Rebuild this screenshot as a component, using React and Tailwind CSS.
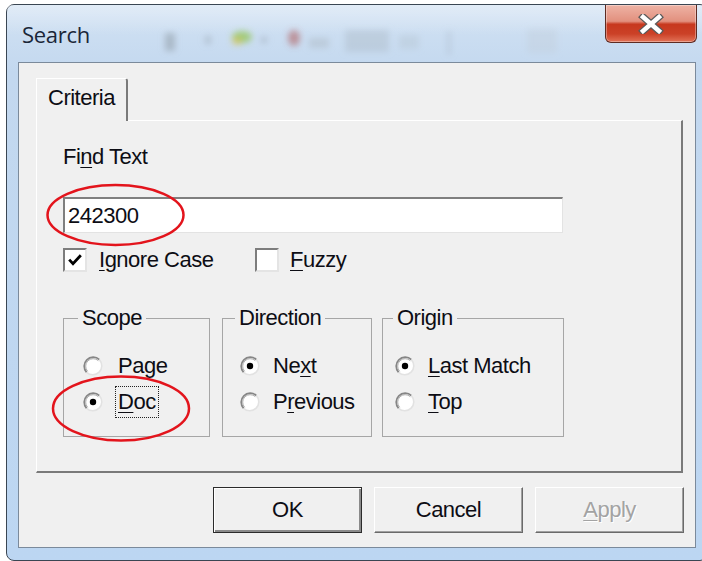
import React from "react";

const ui = "font-['Liberation_Sans',Arial,sans-serif] text-[22px] leading-[24px] tracking-[-0.5px] text-[#0d0d14]";

function Key({ children }) {
  return <span className="underline decoration-1 underline-offset-[3px]">{children}</span>;
}

function Radio({ checked }) {
  return (
    <svg width="20" height="20" viewBox="0 0 20 20" className="shrink-0">
      <circle cx="10" cy="10" r="9" fill="#fff" />
      <path d="M3.64 16.36 A9 9 0 0 1 16.36 3.64" fill="none" stroke="#868686" strokeWidth="1.8" />
      <path d="M16.36 3.64 A9 9 0 0 1 3.64 16.36" fill="none" stroke="#e2e2e2" strokeWidth="1.6" />
      <path d="M4.7 15.3 A7.5 7.5 0 0 1 15.3 4.7" fill="none" stroke="#b0b0b0" strokeWidth="1" />
      {checked && <circle cx="10" cy="10" r="3.2" fill="#000" />}
    </svg>
  );
}

function Check({ checked }) {
  return (
    <span className="flex h-[24px] w-[24px] shrink-0 items-center justify-center border-2 border-t-[#7d7d7d] border-l-[#7d7d7d] border-r-[#e4e4e4] border-b-[#e4e4e4] bg-white">
      {checked && (
        <svg width="16" height="16" viewBox="0 0 16 16">
          <path d="M2.2 7.6 L6 11.6 L13.8 3.2" fill="none" stroke="#000" strokeWidth="2.8" />
        </svg>
      )}
    </span>
  );
}

function Option({ checked, focus, gap, children }) {
  return (
    <div className="flex items-center">
      <Radio checked={checked} />
      <span
        className={`${gap} border px-[2px] py-[3px] ${focus ? "border-dotted border-[#222]" : "border-transparent"}`}
      >
        {children}
      </span>
    </div>
  );
}

function Group({ title, width, legendGap, padLeft, gap, items }) {
  return (
    <fieldset className={`${width} border border-[#a6a6a6]`}>
      <legend className={`${legendGap} px-[4px]`}>{title}</legend>
      <div className={`flex flex-col gap-[4px] ${padLeft} pt-[20px] pb-[18px]`}>
        {items.map((it, i) => (
          <Option key={i} checked={it.checked} focus={it.focus} gap={gap}>
            {it.label}
          </Option>
        ))}
      </div>
    </fieldset>
  );
}

function Button({ children, isDefault, disabled }) {
  const edge = isDefault
    ? "border border-[#2b2b2b] shadow-[inset_1px_1px_0_#ffffff,inset_-2px_-2px_0_#8a8a8a]"
    : "border border-t-white border-l-white border-r-[#6a6a6a] border-b-[#6a6a6a] shadow-[inset_-1px_-1px_0_#a0a0a0]";
  return (
    <div
      className={`flex h-[46px] w-[149px] items-center justify-center bg-[#f0f0f0] ${edge} ${
        disabled ? "text-[#a3a3a3] [text-shadow:1px_1px_0_#ffffff]" : ""
      }`}
    >
      {children}
    </div>
  );
}

function TitleHaze() {
  return (
    <svg className="pointer-events-none absolute left-0 top-0" width="700" height="57" viewBox="0 0 700 57">
      <defs>
        <filter id="soft" x="-50%" y="-50%" width="200%" height="200%">
          <feGaussianBlur stdDeviation="3" />
        </filter>
        <linearGradient id="sheen" x1="0" y1="0" x2="0" y2="1">
          <stop offset="0" stopColor="#ffffff" stopOpacity="0.35" />
          <stop offset="1" stopColor="#ffffff" stopOpacity="0" />
        </linearGradient>
      </defs>
      <rect x="0" y="0" width="700" height="30" fill="url(#sheen)" />
      <g filter="url(#soft)">
        <rect x="158" y="28" width="10" height="18" fill="#8f9aa6" opacity="0.55" />
        <rect x="198" y="31" width="6" height="8" fill="#9aa6b2" opacity="0.5" />
        <ellipse cx="235" cy="32" rx="10" ry="6" fill="#8fc34a" opacity="0.7" />
        <ellipse cx="230" cy="36" rx="5" ry="4" fill="#e0c24a" opacity="0.6" />
        <rect x="254" y="32" width="6" height="6" fill="#97a3af" opacity="0.5" />
        <ellipse cx="287" cy="33" rx="6" ry="8" fill="#b06060" opacity="0.6" />
        <rect x="302" y="33" width="20" height="10" fill="#aab6c2" opacity="0.45" />
        <rect x="338" y="25" width="44" height="22" fill="#aebbc8" opacity="0.45" />
        <rect x="392" y="30" width="20" height="14" fill="#b2bfcc" opacity="0.35" />
        <rect x="440" y="26" width="4" height="24" fill="#a7b4c2" opacity="0.4" />
        <rect x="520" y="24" width="30" height="24" fill="#c0ccd8" opacity="0.35" />
      </g>
    </svg>
  );
}

function CloseButton() {
  return (
    <div className="relative mr-[10px] flex h-[38px] w-[92px] items-center justify-center rounded-b-[6px] border border-t-0 border-[#5e2b22] bg-[linear-gradient(to_bottom,#eeb3a5_0%,#e2907e_44%,#c7381e_52%,#cb4127_78%,#e27358_100%)] shadow-[inset_0_0_0_1px_rgba(255,255,255,0.35)]">
      <svg width="26" height="20" viewBox="0 0 26 20">
        <path d="M5 3 L21 17 M21 3 L5 17" stroke="#5a5a5a" strokeWidth="7" strokeLinecap="square" />
        <path d="M5 3 L21 17 M21 3 L5 17" stroke="#ffffff" strokeWidth="4.5" strokeLinecap="square" />
      </svg>
    </div>
  );
}

export default function App() {
  return (
    <div className={`relative h-[561px] w-[702px] overflow-hidden bg-white pl-[6px] pt-[4px] ${ui}`}>
      {/* window frame */}
      <div className="h-[557px] w-[702px] rounded-[8px] border border-[#3a4653] bg-[linear-gradient(to_bottom,#d2e2f3_0%,#c3d8ef_12%,#bcd6f2_100%)]">
        {/* title bar */}
        <div className="relative flex h-[57px] items-start">
          <TitleHaze />
          <div className="relative self-center pl-[15px] font-['Open_Sans',Arial,sans-serif] text-[22px] tracking-[-0.3px] text-[#1a2638]">
            Search
          </div>
          <div className="relative ml-auto">
            <CloseButton />
          </div>
        </div>

        {/* client area */}
        <div className="ml-[11px] flex h-[486px] w-[678px] flex-col border border-[#7b8a9b] bg-[#f0f0f0] pt-[15px]">
          {/* tab strip */}
          <div className="flex pl-[17px]">
            <div className="relative z-10 -mb-px h-[43px] w-[92px] rounded-tr-[3px] border-t border-l border-r-2 border-t-white border-l-white border-r-[#7a7a7a] bg-[#f0f0f0] pl-[11px] pt-[7px]">
              Criteria
            </div>
          </div>

          {/* tab page */}
          <div className="ml-[17px] h-[353px] w-[647px] border-t border-l border-r-2 border-b-2 border-t-white border-l-white border-r-[#7a7a7a] border-b-[#7a7a7a] pl-[26px] pt-[24px]">
            <div>
              Fi<Key>n</Key>d Text
            </div>

            <div className="mt-[28px] flex h-[36px] w-[500px] items-center border-t-2 border-l-2 border-r border-b border-t-[#7f7f7f] border-l-[#7f7f7f] border-r-[#e3e3e3] border-b-[#e3e3e3] bg-white pl-[3px]">
              242300
            </div>

            <div className="mt-[15px] flex h-[24px] items-center">
              <div className="flex w-[192px] items-center gap-[12px]">
                <Check checked />
                <span>
                  <Key>I</Key>gnore Case
                </span>
              </div>
              <div className="flex items-center gap-[11px]">
                <Check />
                <span>
                  <Key>F</Key>uzzy
                </span>
              </div>
            </div>

            <div className="mt-[34px] flex items-start">
              <Group
                title="Scope"
                width="w-[147px]"
                legendGap="ml-[14px]"
                padLeft="pl-[19px]"
                gap="ml-[12px]"
                items={[
                  { label: "Page" },
                  { label: <><Key>D</Key>oc</>, checked: true, focus: true },
                ]}
              />
              <div className="ml-[12px]">
                <Group
                  title="Direction"
                  width="w-[150px]"
                  legendGap="ml-[12px]"
                  padLeft="pl-[17px]"
                  gap="ml-[10px]"
                  items={[
                    { label: <>Ne<Key>x</Key>t</>, checked: true },
                    { label: <>P<Key>r</Key>evious</> },
                  ]}
                />
              </div>
              <div className="ml-[10px]">
                <Group
                  title="Origin"
                  width="w-[182px]"
                  legendGap="ml-[10px]"
                  padLeft="pl-[12px]"
                  gap="ml-[10px]"
                  items={[
                    { label: <><Key>L</Key>ast Match</>, checked: true },
                    { label: <><Key>T</Key>op</> },
                  ]}
                />
              </div>
            </div>
          </div>

          {/* dialog buttons */}
          <div className="mt-[14px] flex justify-end gap-[12px] pr-[11px]">
            <Button isDefault>OK</Button>
            <Button>Cancel</Button>
            <Button disabled>
              <span>
                <Key>A</Key>pply
              </span>
            </Button>
          </div>
        </div>
      </div>

      {/* hand-drawn red markers */}
      <svg className="pointer-events-none absolute left-0 top-0" width="702" height="561" viewBox="0 0 702 561">
        <ellipse cx="115.5" cy="215" rx="68" ry="30" fill="none" stroke="#e3141c" strokeWidth="2.5" />
        <ellipse cx="121" cy="408.5" rx="68" ry="32" fill="none" stroke="#e3141c" strokeWidth="2.5" />
      </svg>
    </div>
  );
}
